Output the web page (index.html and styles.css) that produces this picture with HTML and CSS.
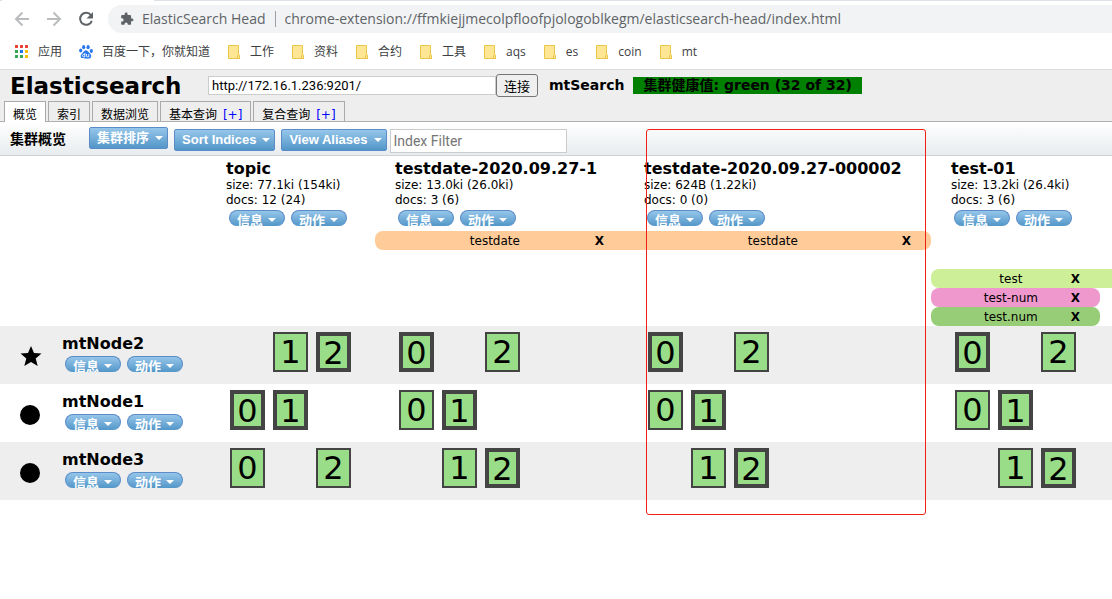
FILE: index.html
```html
<!DOCTYPE html>
<html lang="zh-CN">
<head>
<meta charset="utf-8">
<title>ElasticSearch Head</title>
<link rel="stylesheet" href="styles.css">
</head>
<body>
<svg class="defs" width="0" height="0" aria-hidden="true">
  <symbol id="folder" viewBox="0 0 14 16"><path d="M1.500 1.500h10v9.500h1v3.500h-11z" fill="#ffe694" stroke="#e9c64b"/><path d="M10.500 14.500v-3l1-1 1 1v3z" fill="#ffe694" stroke="#e9c64b"/></symbol>
</svg>
<div class="browser">
  <div class="tabstrip"><span class="tab-end"></span></div>
  <div class="navbar">
    <button class="nav" aria-label="Back"><svg width="16" height="16" viewBox="0 0 16 16" fill="none" stroke="#babcbe" stroke-width="2"><path d="M15 8H2M8.500 1.500 2 8l6.500 6.500"/></svg></button>
    <button class="nav" aria-label="Forward"><svg width="16" height="16" viewBox="0 0 16 16" fill="none" stroke="#babcbe" stroke-width="2"><path d="M1 8h13M7.500 1.500 14 8l-6.500 6.500"/></svg></button>
    <button class="nav" aria-label="Reload"><svg width="16" height="16" viewBox="0 0 16 16"><path d="M13 4.300A6 6 0 1 0 13.800 9.800" fill="none" stroke="#5f6368" stroke-width="2"/><path d="M15 1v6.500H8.500z" fill="#5f6368"/></svg></button>
    <div class="omnibox">
      <svg width="14" height="14" viewBox="0 0 24 24" fill="#5f6368"><path d="M20.500 11H19V7a2 2 0 0 0-2-2h-4V3.500a2.500 2.500 0 0 0-5 0V5H4a2 2 0 0 0-2 2v3.800h1.500a2.700 2.700 0 0 1 0 5.400H2V20a2 2 0 0 0 2 2h3.800v-1.500a2.700 2.700 0 0 1 5.400 0V22H17a2 2 0 0 0 2-2v-4h1.500a2.500 2.500 0 0 0 0-5z"/></svg>
      <span class="site">ElasticSearch Head</span>
      <span class="url">chrome-extension://ffmkiejjmecolpfloofpjologoblkegm/elasticsearch-head/index.html</span>
    </div>
  </div>
  <nav class="bookmarks">
    <a class="apps" href="#"><svg width="14" height="14" viewBox="0 0 14 14"><path fill="#ea4335" d="M0 0h3v3H0zM5 0h3v3H5zM10 0h3v3h-3z"/><path fill="#34a853" d="M0 5h3v3H0zM0 10h3v3H0zM5 10h3v3H5z"/><path fill="#1a73e8" d="M5 5h3v3H5z"/><path fill="#fbbc04" d="M10 5h3v3h-3zM10 10h3v3h-3z"/></svg>应用</a>
    <a class="baidu" href="#"><svg width="14" height="14" viewBox="0 0 14 14"><g fill="#2878f0"><ellipse cx="4.700" cy="2.200" rx="1.600" ry="2.100"/><ellipse cx="9.100" cy="2.200" rx="1.600" ry="2.100"/><ellipse cx="1.700" cy="5.600" rx="1.600" ry="2"/><ellipse cx="12.300" cy="5.900" rx="1.600" ry="2"/><path d="M7 5.200c1.500 0 2.200 1.500 3.400 2.700 1.300 1.200 2.100 2 1.800 3.700-.3 1.900-2 2.400-5.200 2s-5 .1-5.300-2c-.2-1.700.7-2.500 1.900-3.700S5.500 5.200 7 5.200z"/></g><path d="M5.900 8v3.800H4.700q-1.200-.1-1.200-1.200t1.200-1.200h1.200M7.500 9v1.900q0 .9 1 .9h1.300V9" fill="none" stroke="#fff" stroke-width=".9"/></svg>百度一下，你就知道</a>
    <a href="#"><svg width="14" height="16"><use href="#folder"/></svg>工作</a>
    <a href="#"><svg width="14" height="16"><use href="#folder"/></svg>资料</a>
    <a href="#"><svg width="14" height="16"><use href="#folder"/></svg>合约</a>
    <a href="#"><svg width="14" height="16"><use href="#folder"/></svg>工具</a>
    <a href="#"><svg width="14" height="16"><use href="#folder"/></svg>aqs</a>
    <a href="#"><svg width="14" height="16"><use href="#folder"/></svg>es</a>
    <a href="#"><svg width="14" height="16"><use href="#folder"/></svg>coin</a>
    <a href="#"><svg width="14" height="16"><use href="#folder"/></svg>mt</a>
  </nav>
</div>

<header class="header">
  <div class="connect">
    <h1>Elasticsearch</h1>
    <input class="uri" type="text" value="http://172.16.1.236:9201/" aria-label="URI">
    <button class="go">连接</button>
    <span class="cluster">mtSearch</span>
    <span class="health">集群健康值: green (32 of 32)</span>
  </div>
  <nav class="tabs">
    <a class="tab active" href="#">概览</a>
    <a class="tab" href="#">索引</a>
    <a class="tab" href="#">数据浏览</a>
    <span class="tab"><a href="#">基本查询</a> <a class="plus" href="#">[+]</a></span>
    <span class="tab"><a href="#">复合查询</a> <a class="plus" href="#">[+]</a></span>
  </nav>
</header>

<div class="toolbar">
  <h2>集群概览</h2>
  <button class="menu cjk">集群排序<i></i></button>
  <button class="menu">Sort Indices<i></i></button>
  <button class="menu">View Aliases<i></i></button>
  <input class="filter" type="text" placeholder="Index Filter" aria-label="Index Filter">
</div>

<main class="overview">
<table class="grid">
  <colgroup><col class="c-node"><col class="c-short"><col class="c-mid"><col class="c-long"><col class="c-short"><col></colgroup>
  <thead>
    <tr class="indices">
      <td></td>
      <th scope="col"><h3>topic</h3><p>size: 77.1ki (154ki)</p><p>docs: 12 (24)</p><div class="pills"><button class="pill">信息<i></i></button><button class="pill">动作<i></i></button></div></th>
      <th scope="col"><h3>testdate-2020.09.27-1</h3><p>size: 13.0ki (26.0ki)</p><p>docs: 3 (6)</p><div class="pills"><button class="pill">信息<i></i></button><button class="pill">动作<i></i></button></div></th>
      <th scope="col"><h3>testdate-2020.09.27-000002</h3><p>size: 624B (1.22ki)</p><p>docs: 0 (0)</p><div class="pills"><button class="pill">信息<i></i></button><button class="pill">动作<i></i></button></div></th>
      <th scope="col"><h3>test-01</h3><p>size: 13.2ki (26.4ki)</p><p>docs: 3 (6)</p><div class="pills"><button class="pill">信息<i></i></button><button class="pill">动作<i></i></button></div></th>
      <td></td>
    </tr>
    <tr class="aliases"><td></td><td></td><td><div class="alias orange start"><span>testdate</span><button>X</button></div></td><td><div class="alias orange end"><span>testdate</span><button>X</button></div></td><td></td><td></td></tr>
    <tr class="aliases"><td></td><td></td><td></td><td></td><td></td><td></td></tr>
    <tr class="aliases"><td></td><td></td><td></td><td></td><td><div class="alias lime start"><span>test</span><button>X</button></div></td><td><div class="alias lime"></div></td></tr>
    <tr class="aliases"><td></td><td></td><td></td><td></td><td><div class="alias pink start end"><span>test-num</span><button>X</button></div></td><td></td></tr>
    <tr class="aliases"><td></td><td></td><td></td><td></td><td><div class="alias green start end"><span>test.num</span><button>X</button></div></td><td></td></tr>
  </thead>
  <tbody>
    <tr class="node">
      <th scope="row"><div class="node-box"><svg width="22" height="22" viewBox="0 0 22 22"><path d="m11 1 3 7 7.500.5-5.800 5 2 7.500L11 17l-6.700 4 2-7.500-5.800-5L8 8z"/></svg><div><h3>mtNode2</h3><div class="pills"><button class="pill">信息<i></i></button><button class="pill">动作<i></i></button></div></div></div></th>
      <td><div class="shards"><span></span><button>1</button><button class="primary">2</button></div></td>
      <td><div class="shards"><button class="primary">0</button><span></span><button>2</button></div></td>
      <td><div class="shards"><button class="primary">0</button><span></span><button>2</button></div></td>
      <td><div class="shards"><button class="primary">0</button><span></span><button>2</button></div></td>
      <td></td>
    </tr>
    <tr class="node">
      <th scope="row"><div class="node-box"><svg width="22" height="22" viewBox="0 0 22 22"><circle cx="10" cy="12" r="10"/></svg><div><h3>mtNode1</h3><div class="pills"><button class="pill">信息<i></i></button><button class="pill">动作<i></i></button></div></div></div></th>
      <td><div class="shards"><button class="primary">0</button><button class="primary">1</button></div></td>
      <td><div class="shards"><button>0</button><button class="primary">1</button></div></td>
      <td><div class="shards"><button>0</button><button class="primary">1</button></div></td>
      <td><div class="shards"><button>0</button><button class="primary">1</button></div></td>
      <td></td>
    </tr>
    <tr class="node">
      <th scope="row"><div class="node-box"><svg width="22" height="22" viewBox="0 0 22 22"><circle cx="10" cy="12" r="10"/></svg><div><h3>mtNode3</h3><div class="pills"><button class="pill">信息<i></i></button><button class="pill">动作<i></i></button></div></div></div></th>
      <td><div class="shards"><button>0</button><span></span><button>2</button></div></td>
      <td><div class="shards"><span></span><button>1</button><button class="primary">2</button></div></td>
      <td><div class="shards"><span></span><button>1</button><button class="primary">2</button></div></td>
      <td><div class="shards"><span></span><button>1</button><button class="primary">2</button></div></td>
      <td></td>
    </tr>
  </tbody>
</table>
<div class="marker"></div>
</main>
</body>
</html>
```
FILE: styles.css
```css
* { box-sizing: border-box; }
body {
  margin: 0;
  background: #fff;
  color: #000;
  font: 12px/15px "DejaVu Sans", "Noto Sans CJK SC", sans-serif;
  overflow-x: hidden;
}
h1, h2, h3, p { margin: 0; }
a { color: inherit; text-decoration: none; }
button { font: inherit; color: inherit; padding: 0; border: 0; background: none; white-space: nowrap; }
.defs { display: block; }

/* browser frame */
.browser { border-bottom: 1px solid #d9dbde; color: #3c4043; }
.tabstrip { height: 1px; background: #dee1e6; }
.tab-end { display: block; width: 152px; height: 1px; margin-left: 2px; background: #fff; }
.navbar { display: flex; align-items: center; padding: 4px 0 4px 14px; }
.nav { display: block; width: 16px; height: 16px; margin-right: 16px; }
.nav svg { display: block; }
.omnibox {
  flex: 1;
  display: flex;
  align-items: center;
  height: 28px;
  margin: 0 -20px 0 -2px;
  padding-left: 12px;
  border-radius: 14px 0 0 14px;
  background: #f1f3f4;
  color: #5f6368;
  font: 14px/20px "Open Sans", sans-serif;
  white-space: nowrap;
}
.site { margin-left: 8px; padding-right: 9px; border-right: 1px solid #9aa0a6; line-height: 16px; }
.url { margin-left: 9px; }
.bookmarks {
  display: flex;
  align-items: center;
  gap: 17px;
  height: 32px;
  padding: 0 0 2px 15px;
  font: 12px/16px "Open Sans", "Noto Sans CJK SC", sans-serif;
  white-space: nowrap;
}
.bookmarks a { display: flex; align-items: center; gap: 9px; }

/* cluster header */
.header { background: #eee; border-bottom: 1px solid #b0b0b0; }
.connect { display: flex; align-items: center; height: 31px; padding-left: 10px; white-space: nowrap; }
.connect h1 { width: 198px; font-size: 23px; line-height: 30px; }
.uri {
  width: 288px;
  height: 19px;
  padding: 0 3px;
  border: 1px solid #ccc;
  background: #fff;
  font: 13px/16px Roboto, sans-serif;
}
.go {
  width: 42px;
  height: 23px;
  border: 1px solid #767676;
  border-radius: 3px;
  background: #efefef;
  font: 13px/20px "Noto Sans CJK SC", sans-serif;
}
.cluster { margin: 0 9px 0 11px; font-size: 14px; font-weight: bold; }
.health { padding: 0 10px; background: green; font-size: 14px; line-height: 17px; font-weight: bold; }
.tabs { display: flex; gap: 2px; padding-left: 4px; }
.tab {
  height: 20px;
  padding: 4px 8px 0;
  border: 1px solid #aaa;
  border-bottom: 0;
  line-height: 18px;
  overflow: hidden;
  white-space: nowrap;
}
.tab.active { height: 21px; margin-bottom: -1px; background: #fff; }
.plus { margin-left: 2px; color: #00f; }

/* toolbar */
.toolbar {
  display: flex;
  align-items: flex-start;
  height: 34px;
  padding: 5px 0 0 10px;
  border-bottom: 1px solid #ced3d6;
  background: linear-gradient(#fff, #e8ecee);
}
.toolbar h2 { width: 79px; font-size: 14px; line-height: 24px; }
.menu, .pill {
  display: flex;
  align-items: center;
  border: 1px solid #5c8cc8;
  background: linear-gradient(#96c6ea, #5296c8);
  color: #fff;
  font-weight: bold;
}
.menu {
  height: 22px;
  margin: 2px 6px 0 0;
  padding: 0 4px 0 7px;
  border-radius: 2px;
  font: bold 13px/18px "Liberation Sans", "Noto Sans CJK SC", sans-serif;
}
.menu.cjk { margin-top: 0; }
.menu i, .pill i {
  margin-left: 6px;
  border: 4px solid transparent;
  border-top-color: #fff;
  border-bottom: 0;
}
.filter {
  width: 177px;
  height: 24px;
  margin: 2px 0 0 -3px;
  padding: 0 3px;
  border: 1px solid #ccc;
  background: #fff;
  font: 14px/18px Roboto, sans-serif;
}
.filter::placeholder { color: #757575; opacity: 1; }

/* index and node grid */
.overview { position: relative; padding-bottom: 40px; }
.grid { width: 100%; border-collapse: collapse; table-layout: fixed; }
.grid th, .grid td { padding: 0; text-align: left; vertical-align: top; font-weight: normal; white-space: nowrap; }
.c-node { width: 206px; }
.c-short { width: 169px; }
.c-mid { width: 249px; }
.c-long { width: 307px; }
.grid h3 { font-size: 16px; line-height: 20px; }
.grid .indices th { height: 75px; padding: 3px 0 0 20px; }
.indices h3 { margin-bottom: -1px; }
.pills { display: flex; gap: 6px; padding: 2px 0 0 3px; }
.pill {
  height: 16px;
  padding: 2px 8px 0 7px;
  border-bottom: 0;
  border-radius: 8px;
  font: bold 13px/16px "Noto Sans CJK SC", sans-serif;
  overflow: hidden;
}
.pill i { margin-left: 5px; }
.grid .aliases td { height: 19px; }
.alias { display: flex; height: 19px; padding: 1px 20px 0; line-height: 18px; }
.alias span { flex: 1; text-align: center; }
.alias button { font-weight: bold; }
.start { border-radius: 8px 0 0 8px; }
.end { border-radius: 0 8px 8px 0; }
.start.end { border-radius: 8px; }
.orange { background: #fc9; }
.lime { background: #cdef98; }
.pink { background: #ef98cd; }
.green { background: #98cd78; }

.node { height: 58px; }
.node:nth-child(odd) { background: #eee; }
.node-box { display: flex; align-items: center; gap: 20px; padding: 8px 0 0 20px; }
.node-box svg { margin-top: 6px; }
.shards { display: grid; grid-template-columns: repeat(3, 35px); gap: 8px; padding: 6px 0 0 24px; }
.shards button {
  height: 40px;
  border: 2px solid #444;
  background: #9d8;
  font-size: 32px;
  line-height: 36px;
}
.shards .primary { border-width: 4px; padding-top: 2px; line-height: 30px; }

/* highlighted index */
.marker {
  position: absolute;
  left: 646px;
  top: -27px;
  width: 280px;
  height: 386px;
  border: 1px solid #f02015;
  border-radius: 3px;
  pointer-events: none;
}
```
